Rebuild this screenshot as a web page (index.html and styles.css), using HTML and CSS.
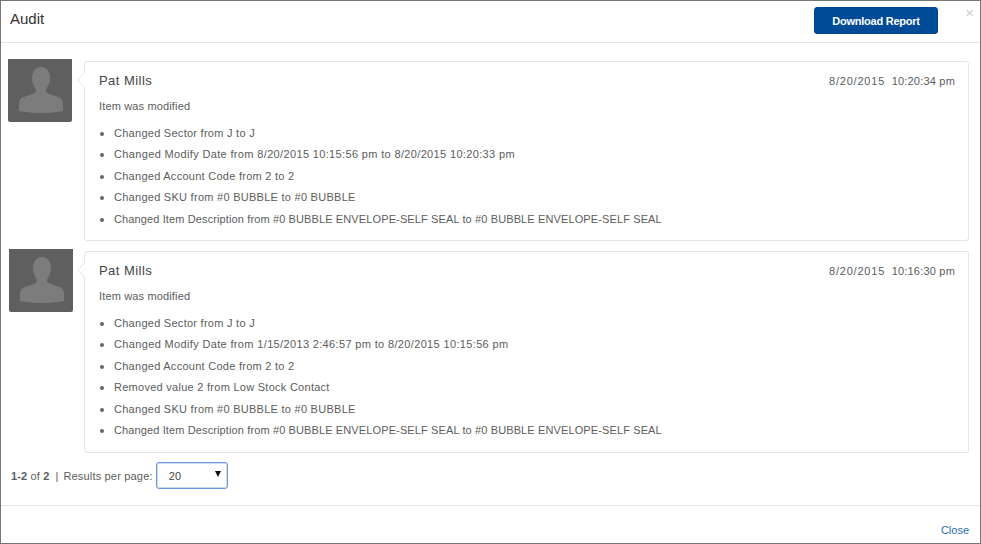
FILE: index.html
```html
<!DOCTYPE html>
<html lang="en">
<head>
<meta charset="utf-8">
<title>Audit</title>
<link rel="stylesheet" href="styles.css">
</head>
<body>
<div class="modal">
  <header class="modal-header">
    <h1 class="modal-title">Audit</h1>
    <button class="btn-download" type="button">Download Report</button>
    <span class="close-x">×</span>
  </header>
  <main class="modal-body">
    <article class="entry">
      <div class="avatar">
        <svg viewBox="0 0 64 63" width="64" height="63"><path class="avatar-shape" d="M33 8c-6 0-9 5-9 11 0 5 2 8 3.500 11 .7 1.500 .5 3-1 4-3 2-10 3-13 5-2 1.500-2.500 4-2.500 7v6c7 1.500 15 2 22 2s15-.5 22-2v-6c0-3-.5-5.500-2.500-7-3-2-10-3-13-5-1.500-1-1.700-2.500-1-4 1.500-3 3.500-6 3.500-11 0-6-3-11-9-11z"/></svg>
      </div>
      <section class="card">
        <div class="card-head"><span class="name">Pat Mills</span><span class="stamp"><span class="date">8/20/2015</span>&nbsp; 10:20:34 pm</span></div>
        <p class="summary">Item was modified</p>
        <ul class="changes">
          <li>Changed Sector from J to J</li>
          <li class="wide">Changed Modify Date from 8/20/2015 10:15:56 pm to 8/20/2015 10:20:33 pm</li>
          <li>Changed Account Code from 2 to 2</li>
          <li>Changed SKU from #0 BUBBLE to #0 BUBBLE</li>
          <li class="tight">Changed Item Description from #0 BUBBLE ENVELOPE-SELF SEAL to #0 BUBBLE ENVELOPE-SELF SEAL</li>
        </ul>
      </section>
    </article>
    <article class="entry entry-second">
      <div class="avatar">
        <svg viewBox="0 0 64 63" width="64" height="63"><path class="avatar-shape" d="M33 8c-6 0-9 5-9 11 0 5 2 8 3.500 11 .7 1.500 .5 3-1 4-3 2-10 3-13 5-2 1.500-2.500 4-2.500 7v6c7 1.500 15 2 22 2s15-.5 22-2v-6c0-3-.5-5.500-2.500-7-3-2-10-3-13-5-1.500-1-1.700-2.500-1-4 1.500-3 3.500-6 3.500-11 0-6-3-11-9-11z"/></svg>
      </div>
      <section class="card">
        <div class="card-head"><span class="name">Pat Mills</span><span class="stamp"><span class="date">8/20/2015</span>&nbsp; 10:16:30 pm</span></div>
        <p class="summary">Item was modified</p>
        <ul class="changes">
          <li>Changed Sector from J to J</li>
          <li class="wide">Changed Modify Date from 1/15/2013 2:46:57 pm to 8/20/2015 10:15:56 pm</li>
          <li>Changed Account Code from 2 to 2</li>
          <li>Removed value 2 from Low Stock Contact</li>
          <li>Changed SKU from #0 BUBBLE to #0 BUBBLE</li>
          <li class="tight">Changed Item Description from #0 BUBBLE ENVELOPE-SELF SEAL to #0 BUBBLE ENVELOPE-SELF SEAL</li>
        </ul>
      </section>
    </article>
    <div class="pager">
      <span class="count"><b>1-2</b> of <b>2</b></span>
      <span class="sep">|</span>
      <span class="per-page">Results per page:</span>
      <div class="select"><span>20</span><span class="caret"></span></div>
    </div>
  </main>
  <footer class="modal-footer"><a class="close-link" href="#">Close</a></footer>
</div>
</body>
</html>
```
FILE: styles.css
```css
* { box-sizing: border-box; }
html, body { margin: 0; padding: 0; height: 100%; background: #fff; }
body { font-family: "Liberation Sans", Arial, sans-serif; font-size: 11px; color: #5c5c5c; overflow: hidden; }
.modal { width: 981px; height: 544px; border: 1px solid #767676; display: flex; flex-direction: column; position: relative; }
.modal-header { height: 42px; border-bottom: 1px solid #e5e5e5; display: flex; align-items: flex-start; padding-left: 9px; }
.modal-title { margin: 9px 0 0; font-size: 15px; font-weight: 400; line-height: 18px; color: #333; flex: 1; }
.btn-download { margin: 6px 42px 0 0; width: 124px; height: 27px; border: 1px solid #00458f; border-radius: 3px; background: #004b97; color: #fff; font: 700 11px "Liberation Sans", Arial, sans-serif; letter-spacing: -0.25px; padding: 0; }
.close-x { position: absolute; top: 4px; right: 6px; font-size: 15px; line-height: 16px; color: #ccc; }
.modal-body { flex: 1; padding: 16px 11px 0 7px; }
.entry { display: flex; align-items: flex-start; }
.entry-second { margin-top: 8px; }
.entry-second .avatar { margin-left: 1px; margin-right: 11px; }
.avatar { width: 64px; height: 63px; flex: none; margin-right: 12px; background: #5f5f5f; border-radius: 0 0 2px 2px; }
.avatar svg { display: block; }
.avatar-shape { fill: #7c7c7c; }
.card { flex: 1; margin-top: 2px; border: 1px solid #e5e5e5; border-radius: 3px; padding: 11px 13px 7px 14px; position: relative; background: #fff; }
.card::before { content: ""; position: absolute; left: -6px; top: 13px; width: 9px; height: 9px; background: #fff; border-left: 1px solid #ececec; border-bottom: 1px solid #ececec; transform: rotate(45deg); }
.card-head { display: flex; justify-content: space-between; align-items: baseline; line-height: 15px; }
.name { font-size: 13px; color: #444; letter-spacing: 0.45px; }
.stamp { letter-spacing: 0.2px; }
.date { letter-spacing: 0.8px; }
.summary { margin: 10px 0 0; line-height: 15px; letter-spacing: 0.15px; }
.changes { margin: 11.5px 0 0; padding: 0; list-style: none; letter-spacing: 0.27px; }
.changes li { line-height: 15px; margin-bottom: 6.5px; }
.changes li::before { content: ""; display: inline-block; width: 4px; height: 4px; margin: 0 10px 0 1px; border-radius: 50%; background: #666; vertical-align: 1px; }
.changes .wide { letter-spacing: 0.35px; }
.changes .tight { letter-spacing: 0.12px; }
.pager { display: flex; align-items: center; margin-top: 9.5px; padding-left: 3px; height: 27px; }
.count { margin-right: 6px; letter-spacing: 0.15px; }
.sep { margin-right: 5px; }
.per-page { letter-spacing: 0.18px; }
.select { width: 72px; height: 27px; margin-left: 3px; border: 1px solid #6d97d8; border-radius: 3px; box-shadow: 0 0 0 1px rgba(109, 151, 216, 0.35) inset; display: flex; justify-content: space-between; align-items: center; padding: 0 6px 0 12px; color: #444; letter-spacing: 0.2px; }
.caret { width: 0; height: 0; border-left: 3px solid transparent; border-right: 3px solid transparent; border-top: 6px solid #111; margin-top: -4px; }
.modal-footer { height: 38px; border-top: 1px solid #e5e5e5; display: flex; justify-content: flex-end; align-items: flex-end; padding: 0 11px 6px 0; }
.close-link { color: #2a6db5; text-decoration: none; line-height: 13px; }
```
